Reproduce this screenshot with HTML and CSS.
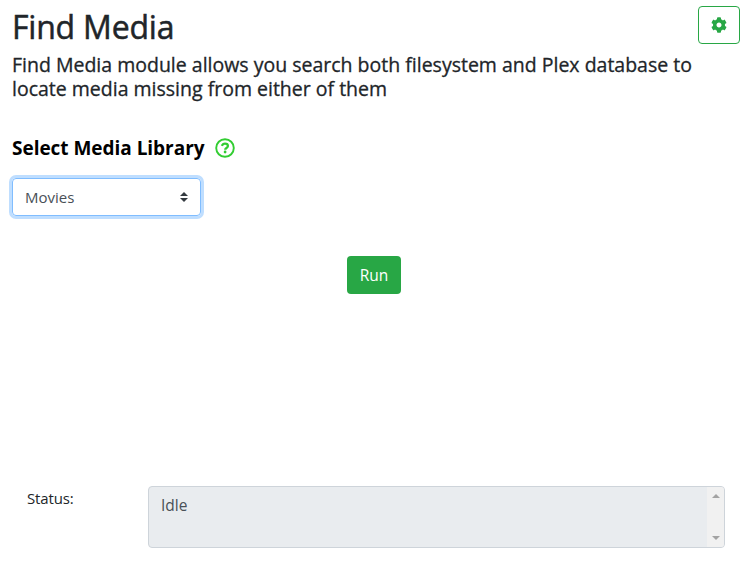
FILE: index.html
```html
<!DOCTYPE html>
<html lang="en">
<head>
<meta charset="utf-8">
<title>Find Media</title>
<link rel="stylesheet" href="styles.css">
</head>
<body>
<header class="header">
  <h1 class="title">Find Media</h1>
  <button class="settings" aria-label="Settings">
    <svg width="16" height="16" viewBox="0 0 512 512"><path fill="currentColor" d="M487.4 315.7l-42.6-24.6c4.3-23.2 4.3-47 0-70.2l42.6-24.6c4.9-2.8 7.1-8.6 5.5-14-11.1-35.6-30-67.8-54.7-94.6-3.8-4.1-10-5.1-14.8-2.3L380.8 110c-17.9-15.4-38.5-27.3-60.8-35.1V25.800c0-5.600-3.900-10.500-9.400-11.700-36.700-8.200-74.300-7.800-109.200 0-5.500 1.200-9.400 6.100-9.400 11.700V75c-22.200 7.900-42.800 19.800-60.800 35.100L88.700 85.500c-4.900-2.800-11-1.900-14.800 2.300-24.700 26.700-43.600 58.900-54.700 94.600-1.700 5.400.6 11.200 5.500 14L67.300 221c-4.300 23.200-4.300 47 0 70.200l-42.600 24.600c-4.900 2.800-7.100 8.600-5.500 14 11.100 35.600 30 67.800 54.700 94.600 3.800 4.100 10 5.100 14.800 2.300l42.600-24.600c17.900 15.400 38.500 27.300 60.800 35.100v49.200c0 5.600 3.900 10.500 9.400 11.700 36.700 8.200 74.300 7.800 109.200 0 5.500-1.200 9.400-6.100 9.400-11.700v-49.200c22.200-7.900 42.800-19.800 60.800-35.100l42.600 24.600c4.900 2.800 11 1.900 14.800-2.300 24.700-26.700 43.600-58.900 54.700-94.600 1.500-5.500-.7-11.300-5.600-14.100zM256 336c-44.100 0-80-35.900-80-80s35.900-80 80-80 80 35.900 80 80-35.900 80-80 80z"/></svg>
  </button>
</header>
<p class="description">Find Media module allows you search both filesystem and Plex database to<br>locate media missing from either of them</p>
<section class="library">
  <h2 class="label">Select Media Library
    <svg width="20" height="20" viewBox="0 0 20 20" fill="none" stroke="currentColor"><circle cx="10" cy="10" r="8.800" stroke-width="1.9"/><path stroke-width="2.300" d="M6.900 7.900C7.500 6.300 8.600 5.700 10 5.700c1.700 0 2.900 1 2.900 2.300 0 2-2.700 1.900-2.700 3.700"/><circle cx="10.100" cy="14" r="1.400" fill="currentColor" stroke="none"/></svg>
  </h2>
  <div class="select" tabindex="0"><span>Movies</span>
    <svg width="8" height="10" viewBox="0 0 4 5"><path fill="#343a40" d="M2 0L0 2h4zm0 5L0 3h4z"/></svg>
  </div>
</section>
<div class="actions"><button class="run">Run</button></div>
<footer class="status">
  <span class="status-label">Status:</span>
  <div class="status-box"><span class="status-text">Idle</span>
    <div class="scrollbar"><i class="arrow up"></i><i class="arrow down"></i></div>
  </div>
</footer>
</body>
</html>
```
FILE: styles.css
```css
* { box-sizing: border-box; }
body {
  margin: 0;
  height: 563px;
  padding: 6px 5px 15px 12px;
  display: flex;
  flex-direction: column;
  overflow: hidden;
  background: #fff;
  color: #212529;
  font: 400 16px/24px "Open Sans", "Noto Sans", sans-serif;
}
h1, h2, p { margin: 0; }
button { font: inherit; padding: 0; }
.header { display: flex; justify-content: space-between; height: 47px; }
.title { font-size: 32px; line-height: 42px; font-weight: 500; letter-spacing: -.2px; -webkit-text-stroke: .5px currentColor; }
.settings {
  display: grid;
  place-items: center;
  width: 42px;
  height: 38px;
  border: 1px solid #28a745;
  border-radius: 4px;
  background: #fff;
  color: #28a745;
}
.description { font-size: 19.5px; line-height: 24px; font-weight: 500; white-space: nowrap; -webkit-text-stroke: .3px currentColor; }
.library { margin-top: 35px; }
.label { display: flex; align-items: center; gap: 10px; height: 24px; font-size: 19px; line-height: 24px; font-weight: 700; letter-spacing: -.03px; color: #000; }
.label svg { color: #32cd32; }
.select {
  display: flex;
  align-items: center;
  justify-content: space-between;
  width: 189px;
  height: 38px;
  margin-top: 18px;
  padding: 0 12px;
  border: 1px solid #80bdff;
  border-radius: 4px;
  box-shadow: 0 0 0 3px #bfdeff;
  outline: none;
  color: #495057;
  font-size: 15px;
}
.actions { display: flex; margin-top: 40px; padding-left: 335px; }
.run { width: 54px; height: 38px; border: 0; border-radius: 4px; background: #28a745; color: #fff; font-size: 15.5px; }
.status { display: flex; margin-top: auto; padding: 0 15px; }
.status-label { width: 121px; font-size: 15px; letter-spacing: -.15px; }
.status-box {
  display: flex;
  flex: 1;
  justify-content: space-between;
  height: 62px;
  border: 1px solid #ced4da;
  border-radius: 4px;
  background: #e9ecef;
  overflow: hidden;
  color: #495057;
}
.status-text { padding: 6px 12px; font-size: 15.5px; }
.scrollbar { display: flex; flex-direction: column; align-items: center; justify-content: space-between; width: 17px; padding: 7px 0; background: #f1f1f1; }
.arrow { border: 4px solid transparent; }
.up { border-top: 0; border-bottom-color: #a3a3a3; }
.down { border-bottom: 0; border-top-color: #a3a3a3; }
```
